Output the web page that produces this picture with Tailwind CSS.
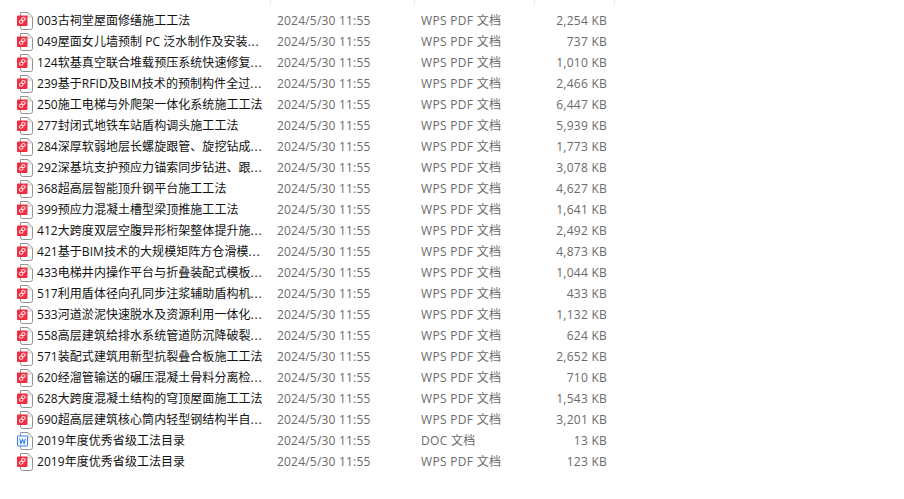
<!DOCTYPE html>
<html lang="zh-CN">
<head>
    <meta charset="UTF-8">
    <title>文件列表</title>
    <script src="https://cdn.jsdelivr.net/npm/@tailwindcss/browser@4"></script>
</head>
<body class="bg-white w-[904px] h-[499px] overflow-hidden font-['Open_Sans','Noto_Sans_CJK_SC',sans-serif] text-[12px] leading-[21px] text-[#6a6a6a]">
    <svg class="hidden">
        <symbol id="pdf" viewBox="0 0 16 18">
            <path d="M3.5 .5H11L15.5 5V15.5Q15.5 17.5 13.5 17.5H5.5Q3.5 17.5 3.5 15.5Z" fill="#fff" stroke="#939393"/>
            <path d="M11 .5V5H15.5" fill="none" stroke="#c4c4c4"/>
            <rect x="0" y="3.5" width="10.5" height="10.5" rx="1" fill="#f02d41"/>
            <rect x="4.6" y="5.6" width="3.6" height="2.8" rx="1.3" fill="none" stroke="#fff"/>
            <rect x="2.3" y="8.4" width="3.6" height="2.8" rx="1.3" fill="none" stroke="#fff"/>
        </symbol>
        <symbol id="doc" viewBox="0 0 16 18">
            <path d="M3.5 .5H11L15.5 5V15.5Q15.5 17.5 13.5 17.5H5.5Q3.5 17.5 3.5 15.5Z" fill="#fff" stroke="#939393"/>
            <path d="M11 .5V5H15.5" fill="none" stroke="#c4c4c4"/>
            <rect x=".5" y="4" width="10" height="10" rx=".5" fill="#fff" stroke="#2f7cf0"/>
            <path d="M2.6 6.6L3.9 11.4L5.5 7.4L7.1 11.4L8.4 6.6" fill="none" stroke="#2f7cf0" stroke-width="1.1"/>
        </symbol>
    </svg>

    <!-- column dividers above the first row -->
    <div class="h-[10px]">
        <div class="h-1 w-[615px] grid grid-cols-[271px_144px_120px_80px]">
            <div class="border-r border-[#e5e5e5]"></div>
            <div class="border-r border-[#e5e5e5]"></div>
            <div class="border-r border-[#e5e5e5]"></div>
            <div class="border-r border-[#e5e5e5]"></div>
        </div>
    </div>

    <div id="rows" class="w-[607px]"></div>

    <script>
        const files = [
            ["003古祠堂屋面修缮施工工法", "2,254 KB"],
            ["049屋面女儿墙预制 PC 泛水制作及安装...", "737 KB"],
            ["124软基真空联合堆载预压系统快速修复...", "1,010 KB"],
            ["239基于RFID及BIM技术的预制构件全过...", "2,466 KB"],
            ["250施工电梯与外爬架一体化系统施工工法", "6,447 KB"],
            ["277封闭式地铁车站盾构调头施工工法", "5,939 KB"],
            ["284深厚软弱地层长螺旋跟管、旋挖钻成...", "1,773 KB"],
            ["292深基坑支护预应力锚索同步钻进、跟...", "3,078 KB"],
            ["368超高层智能顶升钢平台施工工法", "4,627 KB"],
            ["399预应力混凝土槽型梁顶推施工工法", "1,641 KB"],
            ["412大跨度双层空腹异形桁架整体提升施...", "2,492 KB"],
            ["421基于BIM技术的大规模矩阵方仓滑模...", "4,873 KB"],
            ["433电梯井内操作平台与折叠装配式模板...", "1,044 KB"],
            ["517利用盾体径向孔同步注浆辅助盾构机...", "433 KB"],
            ["533河道淤泥快速脱水及资源利用一体化...", "1,132 KB"],
            ["558高层建筑给排水系统管道防沉降破裂...", "624 KB"],
            ["571装配式建筑用新型抗裂叠合板施工工法", "2,652 KB"],
            ["620经溜管输送的碾压混凝土骨料分离检...", "710 KB"],
            ["628大跨度混凝土结构的穹顶屋面施工工法", "1,543 KB"],
            ["690超高层建筑核心筒内轻型钢结构半自...", "3,201 KB"],
            ["2019年度优秀省级工法目录", "13 KB", "doc"],
            ["2019年度优秀省级工法目录", "123 KB"],
        ];

        document.getElementById("rows").innerHTML = files.map(([name, size, kind]) => `
            <div class="flex h-[21px] items-center">
                <svg class="ml-[17px] mr-[4px] w-4 h-[18px] shrink-0"><use href="#${kind === "doc" ? "doc" : "pdf"}"/></svg>
                <span class="w-[240px] text-[#111] tracking-[0.05px] whitespace-nowrap">${name.replace("...", '<span class="tracking-[0.8px]">...</span>')}</span>
                <span class="w-[144px] tracking-[0.2px] whitespace-nowrap">2024/5/30 11:55</span>
                <span class="w-[100px] tracking-[0.3px] whitespace-nowrap">${kind === "doc" ? "DOC 文档" : "WPS PDF 文档"}</span>
                <span class="w-[86px] text-right tracking-[0.25px] whitespace-nowrap">${size}</span>
            </div>`).join("");
    </script>
</body>
</html>
